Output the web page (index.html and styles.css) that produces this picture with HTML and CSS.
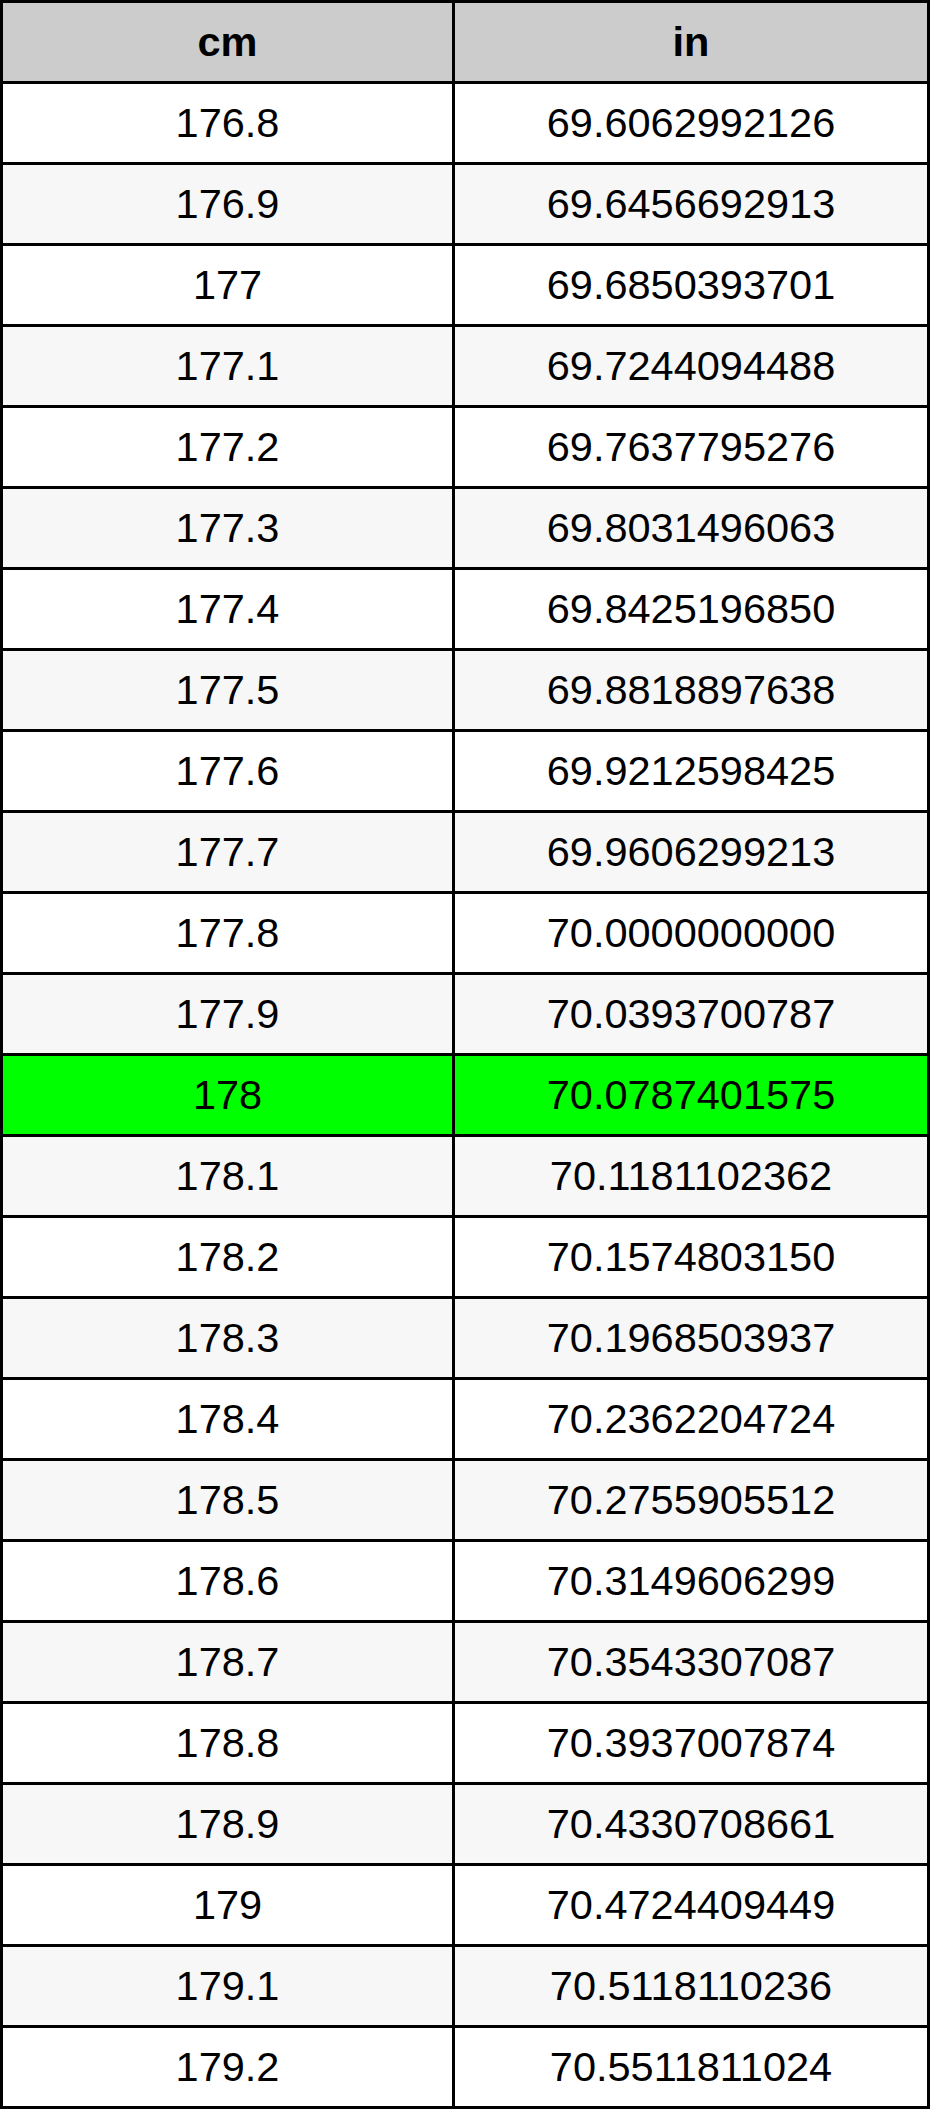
FILE: index.html
```html
<!DOCTYPE html>
<html>
<head>
<meta charset="utf-8">
<link rel="stylesheet" href="styles.css">
</head>
<body>
<table class="conv">
<thead>
<tr><th class="c1">cm</th><th class="c2">in</th></tr>
</thead>
<tbody>
<tr><td>176.8</td><td>69.6062992126</td></tr>
<tr><td>176.9</td><td>69.6456692913</td></tr>
<tr><td>177</td><td>69.6850393701</td></tr>
<tr><td>177.1</td><td>69.7244094488</td></tr>
<tr><td>177.2</td><td>69.7637795276</td></tr>
<tr><td>177.3</td><td>69.8031496063</td></tr>
<tr><td>177.4</td><td>69.8425196850</td></tr>
<tr><td>177.5</td><td>69.8818897638</td></tr>
<tr><td>177.6</td><td>69.9212598425</td></tr>
<tr><td>177.7</td><td>69.9606299213</td></tr>
<tr><td>177.8</td><td>70.0000000000</td></tr>
<tr><td>177.9</td><td>70.0393700787</td></tr>
<tr class="hl"><td>178</td><td>70.0787401575</td></tr>
<tr><td>178.1</td><td>70.1181102362</td></tr>
<tr><td>178.2</td><td>70.1574803150</td></tr>
<tr><td>178.3</td><td>70.1968503937</td></tr>
<tr><td>178.4</td><td>70.2362204724</td></tr>
<tr><td>178.5</td><td>70.2755905512</td></tr>
<tr><td>178.6</td><td>70.3149606299</td></tr>
<tr><td>178.7</td><td>70.3543307087</td></tr>
<tr><td>178.8</td><td>70.3937007874</td></tr>
<tr><td>178.9</td><td>70.4330708661</td></tr>
<tr><td>179</td><td>70.4724409449</td></tr>
<tr><td>179.1</td><td>70.5118110236</td></tr>
<tr><td>179.2</td><td>70.5511811024</td></tr>
</tbody>
</table>
</body>
</html>
```
FILE: styles.css
```css
html, body {
  margin: 0;
  padding: 0;
  background: #ffffff;
}
.conv {
  width: 930px;
  table-layout: fixed;
  border-collapse: separate;
  border-spacing: 0;
  border-left: 3px solid #000;
  border-top: 3px solid #000;
  font-family: "Liberation Sans", Arial, Helvetica, sans-serif;
  font-size: 41.5px;
  color: #000;
}
.conv th, .conv td {
  box-sizing: border-box;
  height: 81px;
  padding: 0;
  text-align: center;
  vertical-align: middle;
  border-right: 3px solid #000;
  border-bottom: 3px solid #000;
  line-height: 1;
}
.conv th {
  background: #cccccc;
  font-weight: bold;
}
.conv .c1 {
  width: 452px;
}
.conv tbody tr:nth-child(odd) td {
  background: #ffffff;
}
.conv tbody tr:nth-child(even) td {
  background: #f7f7f7;
}
.conv tbody tr.hl td {
  background: #00ff00;
}
```
